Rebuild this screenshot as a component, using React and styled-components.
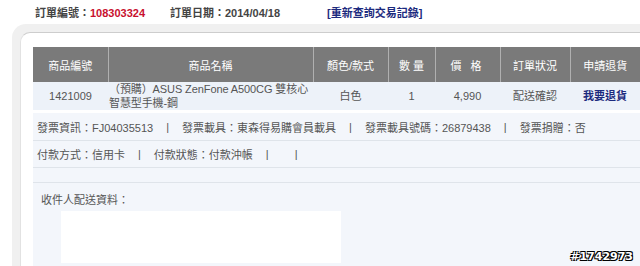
import React from 'react';
import styled, { createGlobalStyle } from 'styled-components';

const GlobalStyle = createGlobalStyle`
  body {
    margin: 0;
    background: #fff;
    font-family: "Liberation Sans", Arial, "Noto Sans CJK TC", sans-serif;
    font-size: 11px;
    color: #555;
  }
`;

const Page = styled.div`
  position: relative;
  width: 640px;
  height: 266px;
  overflow: hidden;
`;

const TopBar = styled.div`
  display: flex;
  align-items: center;
  height: 24px;
  padding-left: 35px;
  font-weight: bold;
  color: #444;
`;

const TopItem = styled.span`
  width: ${(p) => p.$w}px;
  white-space: nowrap;
`;

const OrderNo = styled.span`
  color: #c8102e;
`;

const ReloadLink = styled.a`
  color: #1c2a7e;
  text-decoration: none;
`;

const Frame = styled.div`
  margin-left: 12px;
  background: #f0f0f0;
  border-top-left-radius: 14px;
  padding: 8px 0 0 8px;
`;

const Inner = styled.div`
  background: #fff;
  border-top: 1px solid #cdcdcd;
  border-left: 1px solid #e2e2e2;
  border-top-left-radius: 10px;
  padding: 14px 0 0 12px;
  height: 240px;
  box-sizing: border-box;
`;

const Table = styled.table`
  width: 607px;
  border-collapse: collapse;
  table-layout: fixed;
`;

const Th = styled.th`
  background: #7a7a7a;
  color: #fff;
  font-weight: normal;
  height: 35px;
  padding: 0;
  border-left: 1px solid #b0b0b0;
  letter-spacing: ${(p) => (p.$spaced ? '3px' : '0')};
  &:first-child {
    border-left: none;
  }
`;

const Td = styled.td`
  background: #edf2f9;
  height: 28px;
  padding: 0 ${(p) => (p.$left ? '0 0 1px' : '2px')};
  text-align: ${(p) => (p.$left ? 'left' : 'center')};
  line-height: 14px;
  border-bottom: 3px solid #fff;
`;

const NameLine = styled.span`
  display: block;
  white-space: nowrap;
  letter-spacing: -0.1px;
`;

const ReturnLink = styled.a`
  color: #1c2a7e;
  font-weight: bold;
  text-decoration: none;
`;

const InfoRow = styled.div`
  display: flex;
  align-items: center;
  height: ${(p) => p.$h}px;
  padding-left: 4px;
  background: #f3f6fb;
  border-bottom: 1px solid #dfe4ea;
  white-space: nowrap;
`;

const Sep = styled.span`
  margin: 0 13px;
`;

const ShipBlock = styled.div`
  background: #f3f6fb;
  padding: 8px 0 0 8px;
  height: 80px;
`;

const ShipBox = styled.div`
  margin: 4px 0 0 20px;
  width: 280px;
  height: 52px;
  background: #fff;
`;

const Watermark = styled.div`
  position: absolute;
  right: 7px;
  bottom: 3px;
  font-family: "DejaVu Sans", sans-serif;
  font-weight: bold;
  font-size: 11px;
  color: #fff;
  text-shadow: -1px -1px 0 #000, 1px -1px 0 #000, -1px 1px 0 #000, 1px 1px 0 #000;
`;

const columns = [
  { label: '商品編號', w: 75 },
  { label: '商品名稱', w: 205 },
  { label: '顏色/款式', w: 75 },
  { label: '數 量', w: 47 },
  { label: '價 格', w: 65, spaced: true },
  { label: '訂單狀況', w: 70 },
  { label: '申請退貨', w: 70 },
];

const App = () => {
  return (
    <Page>
      <GlobalStyle />
      <TopBar>
        <TopItem $w={135}>
          訂單編號：<OrderNo>108303324</OrderNo>
        </TopItem>
        <TopItem $w={157}>訂單日期：2014/04/18</TopItem>
        <TopItem>
          <ReloadLink href="#">[重新查詢交易記錄]</ReloadLink>
        </TopItem>
      </TopBar>
      <Frame>
        <Inner>
          <Table>
            <colgroup>
              {columns.map((c) => (
                <col key={c.label} style={{ width: c.w }} />
              ))}
            </colgroup>
            <thead>
              <tr>
                {columns.map((c) => (
                  <Th key={c.label} $spaced={c.spaced}>
                    {c.label}
                  </Th>
                ))}
              </tr>
            </thead>
            <tbody>
              <tr>
                <Td>1421009</Td>
                <Td $left>
                  <NameLine>（預購）ASUS ZenFone A500CG 雙核心</NameLine>
                  <NameLine>智慧型手機-鋼</NameLine>
                </Td>
                <Td>白色</Td>
                <Td>1</Td>
                <Td>4,990</Td>
                <Td>配送確認</Td>
                <Td>
                  <ReturnLink href="#">我要退貨</ReturnLink>
                </Td>
              </tr>
            </tbody>
          </Table>
          <InfoRow $h={27}>
            發票資訊：FJ04035513<Sep>|</Sep>發票載具：東森得易購會員載具<Sep>|</Sep>
            發票載具號碼：26879438<Sep>|</Sep>發票捐贈：否
          </InfoRow>
          <InfoRow $h={26}>
            付款方式：信用卡<Sep>|</Sep>付款狀態：付款沖帳<Sep>|</Sep>
            <Sep>|</Sep>
          </InfoRow>
          <InfoRow $h={14} />
          <ShipBlock>
            收件人配送資料：
            <ShipBox />
          </ShipBlock>
        </Inner>
      </Frame>
      <Watermark>#1742973</Watermark>
    </Page>
  );
};

export default App;
